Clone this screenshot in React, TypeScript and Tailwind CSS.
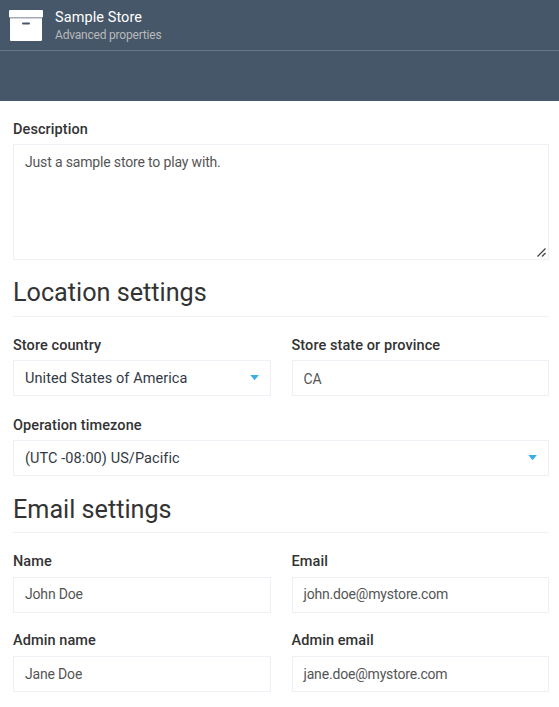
import React from 'react';

type FieldProps = { label: string; value: string; select?: boolean; labelClass?: string; valueClass?: string };

function Field({ label, value, select = false, labelClass = 'leading-5', valueClass = '' }: FieldProps) {
  return (
    <div className="min-w-0 flex-1">
      <div className={`h-[25px] text-[14.5px] font-medium tracking-[0.08px] text-[#333] ${labelClass}`}>{label}</div>
      <div className={`flex h-9 items-center justify-between border border-[#eff0f6] pl-[11px] pr-[11px] ${select ? 'text-[14.5px] tracking-[0.08px] text-[#333a45]' : 'text-[14px] tracking-[-0.18px] text-[#555]'}`}>
        <span className={valueClass}>{value}</span>
        {select && (
          <svg width="9" height="6" viewBox="0 0 9 6" className="mb-px"><path d="M0.3 0H8.9L4.6 5.2Z" fill="#3baee8" /></svg>
        )}
      </div>
    </div>
  );
}

function Heading({ children, className }: { children: React.ReactNode; className: string }) {
  return <h2 className={`h-[43px] border-b border-[#eff0f6] text-[25.2px] text-[#333] ${className}`}>{children}</h2>;
}

export default function App() {
  return (
    <div className="h-[707px] w-[559px] overflow-hidden bg-white font-['Roboto',sans-serif]">
      <header className="h-[101px] bg-[#465769]">
        <div className="flex h-[51px] border-b border-[#697888] pl-[9px]">
          <svg width="34" height="32" viewBox="0 0 34 32" className="mt-[9px]">
            <rect y="1" width="34" height="7.5" rx="1" fill="#fff" />
            <path d="M1 9.3H33V31Q33 32 32 32H2Q1 32 1 31ZM14 13.5Q13 13.5 13 14.5Q13 15.5 14 15.5H20Q21 15.5 21 14.5Q21 13.5 20 13.5Z" fill="#fff" fillRule="evenodd" />
          </svg>
          <div className="ml-3 pt-[9px]">
            <div className="text-[14.5px] leading-[18px] tracking-[0.08px] text-white">Sample Store</div>
            <div className="text-[12px] leading-4 tracking-[-0.2px] text-[#b9b9b9]">Advanced properties</div>
          </div>
        </div>
      </header>
      <main className="pl-[13px] pr-[10px] pt-[19px]">
        <div className="h-6 text-[14.5px] leading-5 font-medium tracking-[0.08px] text-[#333]">Description</div>
        <div className="flex h-[116px] justify-between border border-[#eff0f6] pl-[11px] text-[14px] tracking-[-0.16px] text-[#555]">
          <span className="pt-[7px] leading-5">Just a sample store to play with.</span>
          <svg width="11" height="11" viewBox="0 0 11 11" className="self-end"><path d="M0.5 8.5L8.5 0.5M5 8.5L8.5 5" stroke="#444" strokeWidth="1.3" /></svg>
        </div>
        <div className="pt-[14px]"><Heading className="leading-[37px]">Location settings</Heading></div>
        <div className="flex gap-[21px] pt-[18px]">
          <Field label="Store country" value="United States of America" select labelClass="leading-[22px]" valueClass="pt-[2px]" />
          <Field label="Store state or province" value="CA" labelClass="leading-[22px]" valueClass="pt-[2px]" />
        </div>
        <div className="flex pt-[19px]"><Field label="Operation timezone" value="(UTC -08:00) US/Pacific" select labelClass="leading-[22px]" valueClass="pt-px" /></div>
        <div className="pt-[14px]"><Heading className="leading-[39px]">Email settings</Heading></div>
        <div className="flex gap-[21px] pt-[19px]">
          <Field label="Name" value="John Doe" valueClass="pb-px" />
          <Field label="Email" value="john.doe@mystore.com" valueClass="pb-px" />
        </div>
        <div className="flex gap-[21px] pt-[18px]"><Field label="Admin name" value="Jane Doe" /><Field label="Admin email" value="jane.doe@mystore.com" /></div>
      </main>
    </div>
  );
}
